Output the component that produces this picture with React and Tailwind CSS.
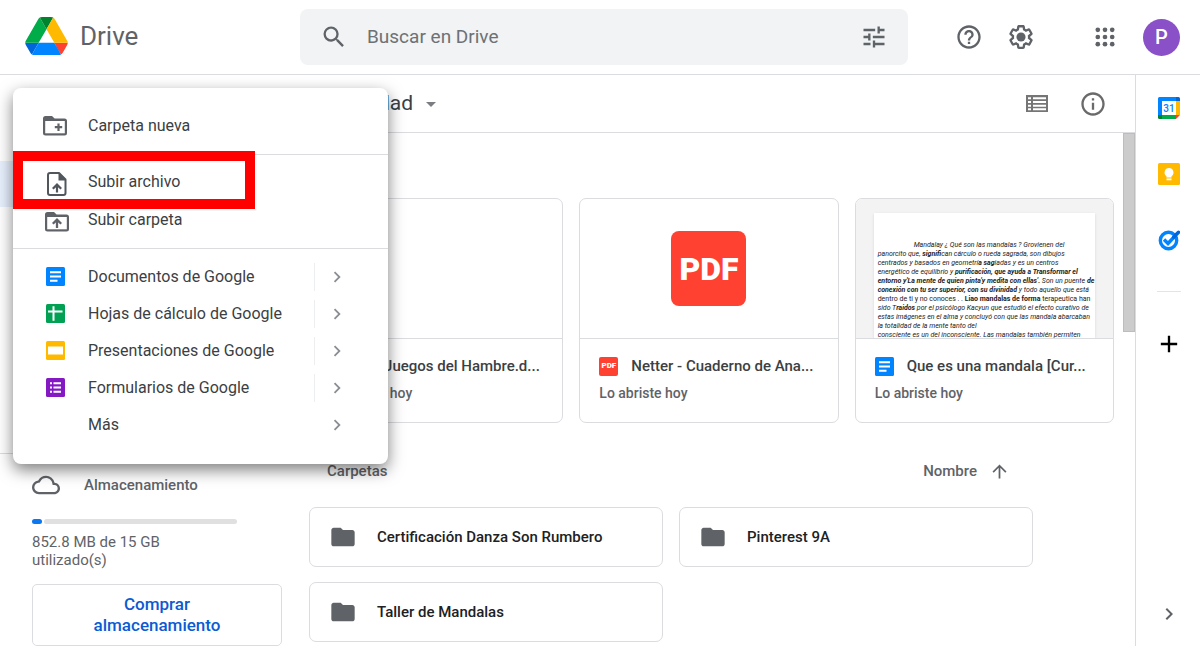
import React from "react";
import {
  MdSearch,
  MdTune,
  MdHelpOutline,
  MdOutlineInfo,
  MdArrowDropDown,
  MdFolder,
  MdArrowUpward,
  MdChevronRight,
  MdAdd,
  MdOutlineCloud,
} from "react-icons/md";

function DriveLogo() {
  return (
    <svg viewBox="0 0 87.3 78" className="h-[38px] w-[43px]" aria-hidden="true">
      <path fill="#0066da" d="m6.6 66.85 3.85 6.65c.8 1.4 1.95 2.5 3.3 3.3l13.75-23.8h-27.5c0 1.55.4 3.1 1.2 4.5z" />
      <path fill="#00ac47" d="m43.65 25-13.75-23.8c-1.35.8-2.5 1.9-3.3 3.3l-25.4 44a9.06 9.06 0 0 0 -1.2 4.5h27.5z" />
      <path fill="#ff4131" d="m73.55 76.8c1.35-.8 2.5-1.9 3.3-3.3l1.6-2.75 7.65-13.25c.8-1.4 1.2-2.95 1.2-4.5h-27.502l5.852 11.5z" />
      <path fill="#00832d" d="m43.65 25 13.75-23.8c-1.35-.8-2.9-1.2-4.5-1.2h-18.5c-1.6 0-3.15.45-4.5 1.2z" />
      <path fill="#0084ff" d="m59.8 53h-32.3l-13.75 23.8c1.35.8 2.9 1.2 4.5 1.2h50.8c1.6 0 3.15-.45 4.5-1.2z" />
      <path fill="#ffba00" d="m73.4 26.5-12.7-22c-.8-1.4-1.95-2.5-3.3-3.3l-13.75 23.8 16.15 28h27.45c0-1.55-.4-3.1-1.2-4.5z" />
    </svg>
  );
}

function GearIcon() {
  return (
    <svg viewBox="0 0 24 24" className="size-[28px]" aria-hidden="true">
      <path
        fill="currentColor"
        d="M13.85 22.25h-3.7c-.74 0-1.36-.54-1.45-1.27l-.27-1.89c-.27-.14-.53-.29-.79-.46l-1.8.72c-.7.26-1.47-.03-1.81-.65L2.2 15.53c-.35-.66-.2-1.44.36-1.88l1.53-1.19c-.01-.15-.02-.3-.02-.46 0-.15.01-.31.02-.46l-1.52-1.19c-.59-.45-.74-1.26-.37-1.88l1.85-3.19c.34-.62 1.11-.9 1.79-.63l1.81.73c.26-.17.52-.32.78-.46l.27-1.91c.09-.7.71-1.25 1.44-1.25h3.7c.74 0 1.36.54 1.45 1.27l.27 1.89c.27.14.53.29.79.46l1.8-.72c.71-.26 1.48.03 1.82.65l1.84 3.18c.36.66.2 1.44-.36 1.88l-1.52 1.19c.01.15.02.3.02.46s-.01.31-.02.46l1.52 1.19c.56.45.72 1.23.37 1.86l-1.86 3.22c-.34.62-1.11.9-1.8.63l-1.8-.72c-.26.17-.52.32-.78.46l-.27 1.91c-.1.68-.72 1.22-1.46 1.22zm-3.23-2h2.76l.37-2.55.53-.22c.44-.18.88-.44 1.34-.78l.45-.34 2.38.96 1.38-2.4-2.03-1.58.07-.56c.03-.26.06-.51.06-.78s-.03-.53-.06-.78l-.07-.56 2.03-1.58-1.39-2.4-2.39.96-.45-.35c-.42-.32-.87-.58-1.33-.77l-.52-.22-.37-2.55h-2.76l-.37 2.55-.53.21c-.44.19-.88.44-1.34.79l-.45.33-2.38-.95-1.39 2.39 2.03 1.58-.07.56a7 7 0 0 0-.06.79c0 .26.02.53.06.78l.07.56-2.03 1.58 1.38 2.4 2.39-.96.45.35c.43.33.86.58 1.33.77l.53.22.38 2.55z"
      />
      <circle cx="12" cy="12" r="3.9" fill="currentColor" />
    </svg>
  );
}

function AppsIcon() {
  return (
    <svg viewBox="0 0 28 28" className="size-7" fill="currentColor" aria-hidden="true">
      {[6.8, 14, 21.2].map((cy) =>
        [6.8, 14, 21.2].map((cx) => <circle key={`${cx}-${cy}`} cx={cx} cy={cy} r="2.35" />)
      )}
    </svg>
  );
}

function ListViewIcon() {
  return (
    <svg viewBox="0 0 22 17" className="h-[17px] w-[22px]" aria-hidden="true">
      <path fill="currentColor" fillRule="evenodd" d="M0 0h22v17H0zM2 2.300v2h3v-2zM7 2.300v2h13v-2zM2 6v2h3V6zM7 6v2h13V6zM2 9.700v2h3v-2zM7 9.700v2h13v-2zM2 13.200v2h3v-2zM7 13.200v2h13v-2z" />
    </svg>
  );
}

function FolderOutline({ children }) {
  return (
    <svg viewBox="0 0 24 20" className="h-5 w-6 shrink-0" aria-hidden="true">
      <path fill="currentColor" d="M2.500 0h6.500l2.600 2.500H21.500A2.500 2.500 0 0 1 24 5V17a2.500 2.500 0 0 1-2.500 2.500H2.500A2.500 2.500 0 0 1 0 17V2.500A2.500 2.500 0 0 1 2.500 0z" />
      <path fill="#fff" d="M2.200 5h19.600v12.300H2.200z" />
      {children}
    </svg>
  );
}

function NewFolderIcon() {
  return (
    <FolderOutline>
      <path d="M15.500 7.500v7.400M11.800 11.200h7.400" stroke="currentColor" strokeWidth="2.200" />
    </FolderOutline>
  );
}

function UploadFolderIcon() {
  return (
    <FolderOutline>
      <path d="M12 16V8M7.800 11.800 12 7.600l4.200 4.200" fill="none" stroke="currentColor" strokeWidth="2.300" />
    </FolderOutline>
  );
}

function UploadFileIcon() {
  return (
    <svg viewBox="0 0 20 24" className="mx-0.5 h-6 w-5 shrink-0" aria-hidden="true">
      <path fill="none" stroke="currentColor" strokeWidth="2" strokeLinejoin="round" d="M3 1h9l6.500 6.500V21a2 2 0 0 1-2 2H3a2 2 0 0 1-2-2V3a2 2 0 0 1 2-2z" />
      <path fill="currentColor" d="M11.500 1v7.500h7.500z" />
      <path d="M10 20.500V13M5.800 16.800 10 12.600l4.200 4.200" fill="none" stroke="currentColor" strokeWidth="2.200" />
    </svg>
  );
}

function DocsIcon() {
  return (
    <svg viewBox="0 0 19 19" className="size-[19px] shrink-0" aria-hidden="true">
      <rect width="19" height="19" rx="1.500" fill="#0084ff" />
      <path d="M4 5.200h11M4 9.500h11M4 13.800h7.500" stroke="#fff" strokeWidth="2" />
    </svg>
  );
}

function SheetsIcon() {
  return (
    <svg viewBox="0 0 19 19" className="size-[19px] shrink-0" aria-hidden="true">
      <rect width="19" height="19" rx="1.500" fill="#00a152" />
      <path d="M2 7.500h14.500M7.500 2.300v14.500" stroke="#fff" strokeWidth="2" />
    </svg>
  );
}

function SlidesIcon() {
  return (
    <svg viewBox="0 0 19 19" className="size-[19px] shrink-0" aria-hidden="true">
      <rect width="19" height="19" rx="1.500" fill="#ffba00" />
      <path d="M2 5.500h15v8H2z" fill="#fff" />
    </svg>
  );
}

function FormsIcon() {
  return (
    <svg viewBox="0 0 19 19" className="size-[19px] shrink-0" aria-hidden="true">
      <rect width="19" height="19" rx="1.500" fill="#8419c4" />
      <path d="M4 5.200h2M7.500 5.200h7.500M4 9.500h2M7.500 9.500h7.500M4 13.800h2M7.500 13.800h7.500" stroke="#fff" strokeWidth="2" />
    </svg>
  );
}

function CalendarIcon() {
  return (
    <svg viewBox="0 0 22 22" className="size-[22px]" aria-hidden="true">
      <path fill="#0084ff" d="M1.500 0H18v4H4v14H0V1.500A1.500 1.500 0 0 1 1.500 0z" />
      <path fill="#0066da" d="M18 0h2.500A1.500 1.500 0 0 1 22 1.500V4h-4z" />
      <path fill="#ffba00" d="M18 4h4v14h-4z" />
      <path fill="#00ac47" d="M4 18h14v4H4z" />
      <path fill="#00832d" d="M0 18h4v4H1.500A1.500 1.500 0 0 1 0 20.500z" />
      <path fill="#ff4131" d="M18 18h4l-4 4z" />
      <path fill="#fff" d="M4 4h14v14H4z" />
      <text x="11" y="14.800" textAnchor="middle" fontSize="10" fontWeight="500" fontFamily="Roboto, sans-serif" fill="#0084ff">
        31
      </text>
    </svg>
  );
}

function KeepIcon() {
  return (
    <svg viewBox="0 0 22 22" className="size-[22px]" aria-hidden="true">
      <rect width="22" height="22" rx="1.500" fill="#ffba00" />
      <path fill="#fff" d="M11 5a4.500 4.500 0 0 1 2.500 8.200V14.500h-5V13.200A4.500 4.500 0 0 1 11 5zM8.500 15.500h5v1.800h-5z" />
    </svg>
  );
}

function TasksIcon() {
  return (
    <svg viewBox="0 0 22 22" className="size-[22px]" aria-hidden="true">
      <circle cx="10.500" cy="11.500" r="8.200" fill="none" stroke="#0084ff" strokeWidth="3.400" />
      <path d="m6 10.500 4 4L17.500 6.500" fill="none" stroke="#0084ff" strokeWidth="3.400" />
      <path d="m15.800 8 4.700-4.700" fill="none" stroke="#0066da" strokeWidth="3.600" strokeLinecap="round" />
    </svg>
  );
}

function PdfSmall() {
  return (
    <span className="flex size-[19px] shrink-0 items-center justify-center rounded-xs bg-[#ff4131] text-[8px] font-black text-white">
      PDF
    </span>
  );
}

function Header() {
  return (
    <header className="flex h-[75px] items-center border-b border-[#dadce0] pr-5 text-[#5f6368]">
      <a href="#drive" className="flex w-[300px] shrink-0 items-center gap-3 pb-0.5 pl-[25px] text-[26px]">
        <DriveLogo />
        <span className="leading-8">Drive</span>
      </a>
      <label className="flex h-14 max-w-[608px] flex-1 items-center rounded-lg bg-[#f1f3f4] px-5">
        <MdSearch className="size-7 shrink-0" />
        <input
          type="search"
          aria-label="Buscar en Drive"
          placeholder="Buscar en Drive"
          className="ml-[19px] min-w-0 flex-1 bg-transparent text-[19px] outline-none placeholder:text-[#6d7175]"
        />
        <button type="button" aria-label="Opciones de búsqueda">
          <MdTune className="size-7" />
        </button>
      </label>
      <div className="ml-auto flex items-center">
        <button type="button" aria-label="Ayuda">
          <MdHelpOutline className="size-7" />
        </button>
        <button type="button" aria-label="Configuración" className="ml-6">
          <GearIcon />
        </button>
        <button type="button" aria-label="Aplicaciones" className="ml-14">
          <AppsIcon />
        </button>
        <button
          type="button"
          aria-label="Cuenta"
          className="ml-6 flex size-[37px] items-center justify-center rounded-full bg-[#8a50c7] text-xl font-medium text-white"
        >
          P
        </button>
      </div>
    </header>
  );
}

const appItems = [
  { label: "Documentos de Google", icon: <DocsIcon /> },
  { label: "Hojas de cálculo de Google", icon: <SheetsIcon /> },
  { label: "Presentaciones de Google", icon: <SlidesIcon /> },
  { label: "Formularios de Google", icon: <FormsIcon /> },
];

function NewMenu() {
  return (
    <div
      role="menu"
      className="absolute top-[88px] left-[13px] z-10 w-[375px] rounded-lg bg-white pb-[21px] text-base text-[#3c4043] shadow-[0_6px_16px_rgba(0,0,0,0.5)]"
    >
      <div className="flex h-[67px] items-center border-b border-[#dadce0] pt-2.5">
        <button type="button" role="menuitem" className="flex h-[38px] w-full items-center pl-[30px]">
          <span className="flex w-[45px] text-[#5f6368]">
            <NewFolderIcon />
          </span>
          Carpeta nueva
        </button>
      </div>
      <div className="relative flex h-[94px] flex-col border-b border-[#dadce0] pt-2">
        <div className="pointer-events-none absolute -top-1 left-0 h-[58px] w-[242px] border-10 border-[#ff0000]" />
        <button type="button" role="menuitem" className="flex h-[38px] items-center pl-8">
          <span className="flex w-[43px] pt-1 text-[#50565c]">
            <UploadFileIcon />
          </span>
          Subir archivo
        </button>
        <button type="button" role="menuitem" className="flex h-[38px] items-center pl-8">
          <span className="flex w-[43px] pt-1 text-[#5f6368]">
            <UploadFolderIcon />
          </span>
          Subir carpeta
        </button>
      </div>
      <div className="pt-[9px]">
        {appItems.map((item) => (
          <button key={item.label} type="button" role="menuitem" className="flex h-[37px] w-full items-center pr-10 pl-[33px]">
            <span className="flex w-[42px]">{item.icon}</span>
            {item.label}
            <span className="ml-auto flex h-7 w-[34px] items-center justify-end border-l border-[#eceef0] text-[#8b8f93]">
              <MdChevronRight className="size-[22px]" />
            </span>
          </button>
        ))}
        <button type="button" role="menuitem" className="flex h-[37px] w-full items-center pr-10 pl-[75px]">
          Más
          <MdChevronRight className="ml-auto size-[22px] text-[#8b8f93]" />
        </button>
      </div>
    </div>
  );
}

function Sidebar() {
  return (
    <aside className="w-[289px] shrink-0 pt-[86px]">
      <div className="h-[46px] rounded-r-full bg-[#e8f0fe]" />
      <div className="mt-[246px] border-b border-[#dadce0]" />
      <div className="pl-8">
        <div className="mt-[17px] flex items-center text-[15px] font-medium text-[#5f6368]">
          <MdOutlineCloud className="size-7" />
          <span className="ml-6 leading-7">Almacenamiento</span>
        </div>
        <div className="mt-5 flex h-[5px] w-[205px] gap-0.5">
          <div className="w-2.5 rounded-full bg-[#0b77f0]" />
          <div className="flex-1 rounded-full bg-[#e0e0e0]" />
        </div>
        <p className="mt-[9px] w-[160px] text-[15px] leading-[18px] text-[#5f6368]">852.8 MB de 15 GB utilizado(s)</p>
        <button
          type="button"
          className="mt-[15px] h-[62px] w-[250px] rounded-[5px] border border-[#dadce0] px-10 text-[17px] leading-[21px] font-medium text-[#0b5bd3]"
        >
          Comprar almacenamiento
        </button>
      </div>
    </aside>
  );
}

const previewText = [
  <span key="a" className="pl-9">Mandalay ¿ Qué son las mandalas ? Grovienen del</span>,
  <>panorcito que, <b>signifi</b>can cárculo o rueda sagrada, son dibujos</>,
  <>centrados y basados en geometrí<b>a sag</b>iadas y es un centros</>,
  <>energético de equilibrio y <b>purificación, que ayuda a Transformar el</b></>,
  <><b>entorno y'La mente de quien pinta'y medita con ellas'.</b> Son un puente <b>de</b></>,
  <><b>conexión con tu ser superior, con su divinidad</b> y todo aquello que está</>,
  <span key="d" className="not-italic">dentro de ti y no conoces . . <b>Liao mandalas de forma</b> terapeutica han</span>,
  <>sido T<b>raidos</b> por el psicólogo Kacyun que estudió el efecto curativo de</>,
  <>estas imágenes en el alma y concluyó con que las mandala abarcaban</>,
  <>la totalidad de la mente tanto del</>,
  <>consciente es un del inconsciente. Las mandalas también permiten</>,
];

function DocPreview() {
  return (
    <div className="h-full bg-[#f3f3f3] px-[18px] pt-3.5">
      <div className="h-full bg-white px-1 pt-7 text-[7px] leading-[9px] text-[#222] italic shadow-sm">
        {previewText.map((line, i) => (
          <div key={i} className="whitespace-nowrap">
            {line}
          </div>
        ))}
      </div>
    </div>
  );
}

function PdfPreview() {
  return (
    <div className="flex h-full items-center justify-center">
      <div className="flex size-[75px] items-center justify-center rounded-lg bg-[#ff4131] text-[32px] font-black text-white">PDF</div>
    </div>
  );
}

function FileCard({ icon, title, children }) {
  return (
    <article className="h-[225px] min-w-0 overflow-hidden rounded-[7px] border border-[#dadce0]">
      <div className="h-[140px] overflow-hidden border-b border-[#dadce0]">{children}</div>
      <div className="px-[19px] pt-3.5">
        <div className="flex items-center gap-[13px]">
          {icon}
          <h3 className="text-[15px] leading-[26px] font-medium whitespace-nowrap text-[#3c4043]">{title}</h3>
        </div>
        <p className="mt-0.5 text-sm leading-6 font-medium text-[#5f6368]">Lo abriste hoy</p>
      </div>
    </article>
  );
}

function FolderButton({ name }) {
  return (
    <button
      type="button"
      className="flex h-[60px] items-center gap-5 rounded-[7px] border border-[#dadce0] pl-[19px] text-[15px] font-medium text-[#202124]"
    >
      <MdFolder className="size-7 text-[#5f6368]" />
      {name}
    </button>
  );
}

function Main() {
  return (
    <main className="flex min-w-0 flex-1 flex-col">
      <div className="flex h-[58px] items-center border-b border-[#dadce0] pr-7 pl-8 text-[#5f6368]">
        <button type="button" className="flex items-center gap-1.5 text-[21px] text-[#3c4043]">
          Mi unidad
          <MdArrowDropDown className="size-6 text-[#7a7e82]" />
        </button>
        <button type="button" aria-label="Vista de lista" className="ml-auto text-[#757575]">
          <ListViewIcon />
        </button>
        <button type="button" aria-label="Detalles" className="ml-[31px] text-[#6a6a6a]">
          <MdOutlineInfo className="size-7" />
        </button>
      </div>
      <div className="flex">
        <div className="min-w-0 flex-1 pt-[65px] pr-[9px] pl-[15px]">
          <div className="grid grid-cols-3 gap-x-4">
            <FileCard icon={<DocsIcon />} title="Los Juegos del Hambre.d..." />
            <FileCard icon={<PdfSmall />} title="Netter - Cuaderno de Ana...">
              <PdfPreview />
            </FileCard>
            <FileCard icon={<DocsIcon />} title="Que es una mandala [Cur...">
              <DocPreview />
            </FileCard>
          </div>
          <div className="mt-9 flex h-6 items-center justify-between pr-[104px] pl-[23px] text-[15px] font-medium text-[#5f6368]">
            <h2>Carpetas</h2>
            <button type="button" className="flex items-center gap-3">
              Nombre
              <MdArrowUpward className="size-[21px]" />
            </button>
          </div>
          <div className="mt-6 grid grid-cols-2 gap-x-4 gap-y-[15px] pr-[81px] pl-[5px]">
            <FolderButton name="Certificación Danza Son Rumbero" />
            <FolderButton name="Pinterest 9A" />
            <FolderButton name="Taller de Mandalas" />
          </div>
        </div>
        <div className="h-[199px] w-3 border border-[#bdbdbd] bg-[#cccccc]" />
      </div>
    </main>
  );
}

function Rail() {
  return (
    <aside className="flex w-[65px] shrink-0 flex-col items-center border-l border-[#dadce0] pt-[22px] pl-0.5">
      <a href="#calendar" aria-label="Calendar">
        <CalendarIcon />
      </a>
      <a href="#keep" aria-label="Keep" className="mt-11">
        <KeepIcon />
      </a>
      <a href="#tasks" aria-label="Tasks" className="mt-11">
        <TasksIcon />
      </a>
      <div className="mt-10 w-6 border-b border-[#e4e4e4]" />
      <button type="button" aria-label="Agregar" className="mt-[38px] text-black">
        <MdAdd className="size-7" />
      </button>
      <button type="button" aria-label="Ocultar panel" className="mt-auto mb-5 text-[#5f6368]">
        <MdChevronRight className="size-6" />
      </button>
    </aside>
  );
}

export default function App() {
  return (
    <div className="relative flex h-screen flex-col overflow-hidden bg-white font-[Roboto,sans-serif]">
      <Header />
      <div className="flex min-h-0 flex-1">
        <Sidebar />
        <Main />
        <Rail />
      </div>
      <NewMenu />
    </div>
  );
}
